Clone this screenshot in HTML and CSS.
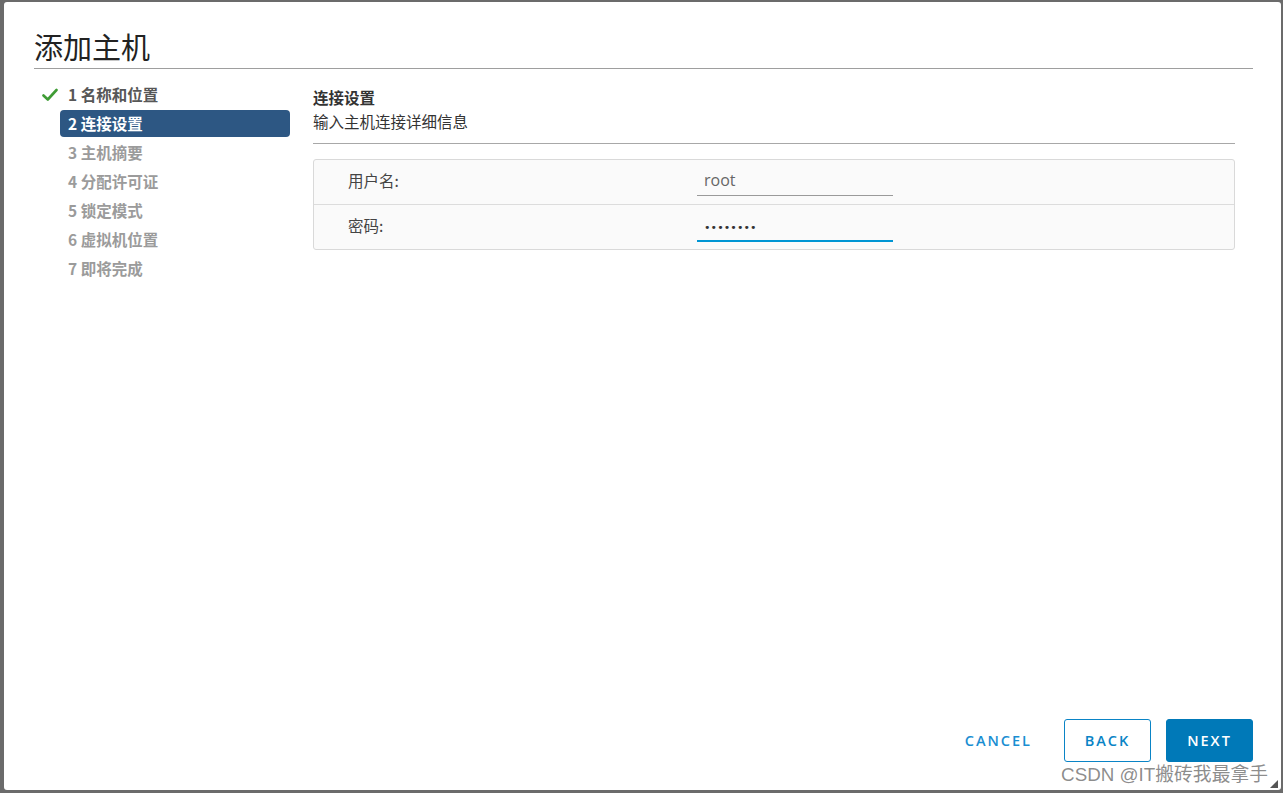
FILE: index.html
```html
<!DOCTYPE html>
<html lang="zh">
<head>
<meta charset="utf-8">
<title>添加主机</title>
<link rel="stylesheet" href="styles.css">
</head>
<body>
<div class="dialog">
  <div class="header"><h1 class="title">添加主机</h1></div>
  <div class="main">
    <nav class="steps">
      <div class="step done">
        <span class="mark"><svg width="16" height="14" viewBox="0 0 16 14"><path d="M1.5 7.5 L5.8 11.5 L14.5 2" fill="none" stroke="#3f9c35" stroke-width="2.6" stroke-linecap="round" stroke-linejoin="round"/></svg></span>
        <span class="label">1 名称和位置</span>
      </div>
      <div class="step active"><span class="mark"></span><span class="label">2 连接设置</span></div>
      <div class="step"><span class="mark"></span><span class="label">3 主机摘要</span></div>
      <div class="step"><span class="mark"></span><span class="label">4 分配许可证</span></div>
      <div class="step"><span class="mark"></span><span class="label">5 锁定模式</span></div>
      <div class="step"><span class="mark"></span><span class="label">6 虚拟机位置</span></div>
      <div class="step"><span class="mark"></span><span class="label">7 即将完成</span></div>
    </nav>
    <section class="content">
      <div class="content-head">
        <div class="content-title">连接设置</div>
        <div class="content-sub">输入主机连接详细信息</div>
      </div>
      <div class="form">
        <div class="row">
          <div class="field-label">用户名:</div>
          <div class="input"><span class="value">root</span></div>
        </div>
        <div class="row">
          <div class="field-label">密码:</div>
          <div class="input focus"><span class="dots">••••••••</span></div>
        </div>
      </div>
    </section>
  </div>
  <div class="footer">
    <button class="btn flat">CANCEL</button>
    <button class="btn outline">BACK</button>
    <button class="btn primary">NEXT</button>
  </div>
  <div class="watermark">CSDN @IT搬砖我最拿手</div>
  <div class="resize"></div>
</div>
</body>
</html>
```

FILE: styles.css
```css
html, body {
  margin: 0;
  padding: 0;
}
body {
  width: 1283px;
  height: 793px;
  overflow: hidden;
  background: #6b6b6b;
  font-family: "Noto Sans CJK SC", "Noto Sans", sans-serif;
  color: #333;
}
.dialog {
  position: relative;
  margin: 2px 0 0 4px;
  width: 1277px;
  height: 788px;
  background: #fff;
  border-radius: 3px;
  box-sizing: border-box;
  padding: 0 28px 0 30px;
  display: flex;
  flex-direction: column;
}
.header {
  padding-top: 26px;
  padding-bottom: 4px;
  border-bottom: 1px solid #9e9e9e;
}
.title {
  margin: 0;
  font-size: 29px;
  line-height: 36px;
  font-weight: 400;
  color: #222;
}
.main {
  flex: 1;
  display: flex;
  gap: 23px;
  padding-right: 18px;
}
.steps {
  width: 256px;
  padding-top: 12px;
  display: flex;
  flex-direction: column;
  gap: 2px;
}
.step {
  display: flex;
  align-items: center;
  height: 27px;
}
.mark {
  width: 26px;
  display: flex;
  align-items: center;
  padding-left: 8px;
  box-sizing: border-box;
}
.label {
  flex: 1;
  height: 27px;
  line-height: 27px;
  padding: 0 8px;
  border-radius: 4px;
  font-size: 15.5px;
  font-weight: 700;
  color: #9b9b9b;
}
.step.done .label {
  color: #575757;
}
.step.active .label {
  background: #2d5783;
  color: #fff;
}
.content {
  flex: 1;
  padding-top: 17px;
}
.content-head {
  border-bottom: 1px solid #a8a8a8;
  padding-bottom: 9px;
}
.content-title {
  font-size: 15.5px;
  line-height: 22px;
  font-weight: 700;
  color: #333;
}
.content-sub {
  font-size: 15.5px;
  line-height: 26px;
  color: #333;
}
.form {
  margin-top: 15px;
  border: 1px solid #d9d9d9;
  border-radius: 3px;
  background: #fafafa;
}
.row {
  display: grid;
  grid-template-columns: 383px 196px;
  align-items: start;
  height: 44px;
}
.row + .row {
  border-top: 1px solid #dcdcdc;
}
.field-label {
  padding-left: 34px;
  font-size: 15.5px;
  line-height: 41px;
  color: #444;
}
.input {
  margin-top: 6px;
  height: 30px;
  border-bottom: 1px solid #9a9a9a;
  box-sizing: border-box;
  padding-left: 7px;
  font-family: "Open Sans", "Noto Sans", sans-serif;
  font-size: 16px;
  line-height: 29px;
  color: #666;
}
.input.focus {
  margin-top: 6px;
  height: 31px;
  border-bottom: 2px solid #0095d3;
}
.dots {
  font-family: "DejaVu Sans", sans-serif;
  font-size: 11px;
  letter-spacing: 0.1px;
  color: #333;
  line-height: 29px;
}
.footer {
  display: flex;
  justify-content: flex-end;
  gap: 15px;
  padding-bottom: 28px;
}
.btn {
  height: 43px;
  box-sizing: border-box;
  border-radius: 3px;
  font-family: "Open Sans", "Noto Sans", sans-serif;
  font-size: 14.5px;
  font-weight: 600;
  letter-spacing: 2px;
  padding: 0 16px;
  cursor: pointer;
}
.btn.flat {
  background: transparent;
  border: 1px solid transparent;
  color: #1a8ed2;
}
.btn.outline {
  min-width: 87px;
  background: #fff;
  border: 1px solid #0a84c6;
  color: #0a84c6;
}
.btn.primary {
  min-width: 87px;
  background: #0079b8;
  border: 1px solid #0079b8;
  color: #fff;
}
.watermark {
  position: absolute;
  right: 13px;
  bottom: 4px;
  font-family: "Liberation Sans", "Noto Sans CJK SC", sans-serif;
  font-size: 18.8px;
  line-height: 22px;
  color: rgba(90, 90, 90, 0.7);
}
.resize {
  position: absolute;
  right: 3px;
  bottom: 2px;
  width: 0;
  height: 0;
  border-left: 8px solid transparent;
  border-bottom: 8px solid #555;
}
```
